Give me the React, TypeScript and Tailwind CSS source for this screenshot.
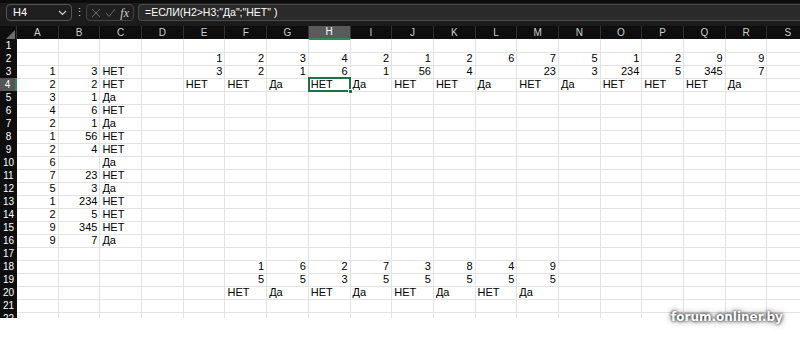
import React from "react";

const COLS = ["A","B","C","D","E","F","G","H","I","J","K","L","M","N","O","P","Q","R","S"];
type V = string | number | null;
const N = null;

function row(vals: V[]): V[] {
  const r: V[] = [];
  for (let i = 0; i < 19; i++) r.push(vals[i] === undefined ? null : vals[i]);
  return r;
}

const DATA: Record<number, V[]> = {
  2: row([N, N, N, N, 1, 2, 3, 4, 2, 1, 2, 6, 7, 5, 1, 2, 9, 9]),
  3: row([1, 3, "НЕТ", N, 3, 2, 1, 6, 1, 56, 4, N, 23, 3, 234, 5, 345, 7]),
  4: row([2, 2, "НЕТ", N, "НЕТ", "НЕТ", "Да", "НЕТ", "Да", "НЕТ", "НЕТ", "Да", "НЕТ", "Да", "НЕТ", "НЕТ", "НЕТ", "Да"]),
  5: row([3, 1, "Да"]),
  6: row([4, 6, "НЕТ"]),
  7: row([2, 1, "Да"]),
  8: row([1, 56, "НЕТ"]),
  9: row([2, 4, "НЕТ"]),
  10: row([6, N, "Да"]),
  11: row([7, 23, "НЕТ"]),
  12: row([5, 3, "Да"]),
  13: row([1, 234, "НЕТ"]),
  14: row([2, 5, "НЕТ"]),
  15: row([9, 345, "НЕТ"]),
  16: row([9, 7, "Да"]),
  18: row([N, N, N, N, N, 1, 6, 2, 7, 3, 8, 4, 9]),
  19: row([N, N, N, N, N, 5, 5, 3, 5, 5, 5, 5, 5]),
  20: row([N, N, N, N, N, "НЕТ", "Да", "НЕТ", "Да", "НЕТ", "Да", "НЕТ", "Да"]),
};

const FONT = { fontFamily: '"Liberation Sans Narrow", "Liberation Sans", Arial, sans-serif' };

export default function App() {
  const rows = Array.from({ length: 22 }, (_, i) => i + 1);
  return (
    <div className="w-[800px] h-[341px] bg-white overflow-hidden relative" style={FONT}>
      {/* Formula bar */}
      <div className="h-[26px] bg-[#1c1c1c] border-t-[3px] border-[#0c0c0c] flex items-start pt-[1px] pl-[6px] gap-0">
        <div className="w-[66px] h-[17px] rounded-[4px] border border-[#555] bg-[#1f1f1f] flex items-center justify-between pl-[6px] pr-[4px]">
          <span className="text-white text-[11px] leading-none">H4</span>
          <svg width="9" height="6" viewBox="0 0 9 6"><path d="M1 1l3.5 3.5L8 1" stroke="#cfcfcf" strokeWidth="1.2" fill="none" /></svg>
        </div>
        <div className="w-[14px] h-[17px] flex items-center justify-center text-[#cfcfcf] text-[11px] leading-none">⋮</div>
        <div className="w-[48px] h-[17px] rounded-[4px] border border-[#444] bg-[#1f1f1f] flex items-center justify-between px-[4px]">
          <svg width="10" height="10" viewBox="0 0 10 10"><path d="M1 1l8 8M9 1l-8 8" stroke="#6a6a6a" strokeWidth="1" /></svg>
          <svg width="11" height="10" viewBox="0 0 11 10"><path d="M1 5l3 3.5L10 1" stroke="#6a6a6a" strokeWidth="1" fill="none" /></svg>
          <span className="text-[#d0d0d0] text-[12px] italic leading-none" style={{ fontFamily: '"Liberation Serif", serif' }}>fx</span>
        </div>
        <div className="ml-[4px] flex-1 h-[17px] rounded-l-[4px] border border-r-0 border-[#4a4a4a] bg-[#2a2a2a] flex items-center pl-[6px]">
          <span className="text-white text-[10.5px] leading-none">=ЕСЛИ(H2&gt;H3;"Да";"НЕТ" )</span>
        </div>
      </div>
      {/* Sheet */}
      <div className="h-[292px] overflow-hidden">
        {/* Column headers */}
        <div className="grid grid-cols-[17px_repeat(19,41.7px)] h-[13px] bg-[#0e0e0e]">
          <div className="relative border-r border-[#333]">
            <svg className="absolute right-[1px] bottom-[1px]" width="9" height="9" viewBox="0 0 9 9"><path d="M9 0V9H0Z" fill="#6b6b6b" /></svg>
          </div>
          {COLS.map((c) => (
            <div
              key={c}
              className={
                c === "H"
                  ? "bg-[#5a5a5a] border-b-2 border-[#2f8a4f] border-r border-r-[#333] text-white text-[10px] leading-[12px] text-center"
                  : "border-r border-[#333] text-[#cdcdcd] text-[10px] leading-[13px] text-center"
              }
            >
              {c}
            </div>
          ))}
        </div>
        {rows.map((r) => {
          const vals = DATA[r] || row([]);
          return (
            <div key={r} className="grid grid-cols-[17px_repeat(19,41.7px)] h-[13px]">
              <div
                className={
                  r === 4
                    ? "bg-[#555] border-r-2 border-[#2f8a4f] text-white text-[10px] leading-[13px] text-center border-b border-b-[#555]"
                    : "bg-[#0e0e0e] text-white text-[10px] leading-[13px] text-center border-b border-[#2a2a2a]"
                }
              >
                {r}
              </div>
              {vals.map((v, i) => (
                <div
                  key={i}
                  className={
                    "border-r border-b border-[#e3e3e3] text-[11px] leading-[12px] text-black whitespace-nowrap overflow-visible " +
                    (typeof v === "number" ? "text-right pr-[2px]" : "text-left pl-[2px]")
                  }
                >
                  {v === null ? "" : v}
                </div>
              ))}
            </div>
          );
        })}
      </div>
      {/* Selected cell H4 */}
      <div className="absolute left-[308px] top-[77px] w-[43px] h-[15px] border-2 border-[#1e7145] pointer-events-none">
        <div className="absolute right-[-4px] bottom-[-4px] w-[5px] h-[5px] bg-[#1e7145] border border-white" />
      </div>
      {/* Watermark */}
      <div
        className="absolute left-[671px] top-[311px] text-white text-[12px] font-bold leading-none [text-shadow:0_0_3px_#000,0_0_6px_rgba(0,0,0,0.7)]"
        style={{ fontFamily: '"DejaVu Sans", Verdana, sans-serif' }}
      >
        forum.onliner.by
      </div>
    </div>
  );
}
